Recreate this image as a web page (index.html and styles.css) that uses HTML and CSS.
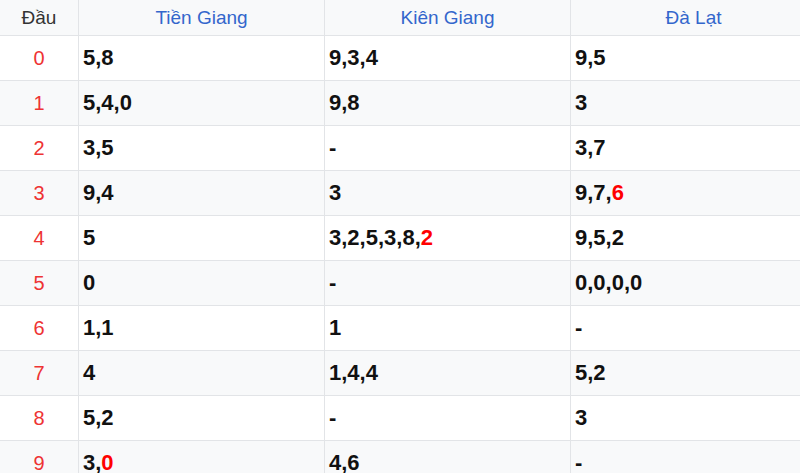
FILE: index.html
```html
<!DOCTYPE html>
<html lang="vi">
<head>
<meta charset="utf-8">
<link rel="stylesheet" href="styles.css">
</head>
<body>
<div class="wrap">
<table class="loto">
<colgroup><col class="c-head"><col class="c-prov"><col class="c-prov"><col class="c-prov"></colgroup>
<thead>
<tr><th class="dau">Đầu</th><th>Tiền Giang</th><th>Kiên Giang</th><th>Đà Lạt</th></tr>
</thead>
<tbody>
<tr><td class="d">0</td><td>5,8</td><td>9,3,4</td><td>9,5</td></tr>
<tr><td class="d">1</td><td>5,4,0</td><td>9,8</td><td>3</td></tr>
<tr><td class="d">2</td><td>3,5</td><td>-</td><td>3,7</td></tr>
<tr><td class="d">3</td><td>9,4</td><td>3</td><td>9,7,<span class="r">6</span></td></tr>
<tr><td class="d">4</td><td>5</td><td>3,2,5,3,8,<span class="r">2</span></td><td>9,5,2</td></tr>
<tr><td class="d">5</td><td>0</td><td>-</td><td>0,0,0,0</td></tr>
<tr><td class="d">6</td><td>1,1</td><td>1</td><td>-</td></tr>
<tr><td class="d">7</td><td>4</td><td>1,4,4</td><td>5,2</td></tr>
<tr><td class="d">8</td><td>5,2</td><td>-</td><td>3</td></tr>
<tr><td class="d">9</td><td>3,<span class="r">0</span></td><td>4,6</td><td>-</td></tr>
</tbody>
</table>
</div>
</body>
</html>
```
FILE: styles.css
```css
html, body {
  margin: 0;
  padding: 0;
  background: #fff;
}
.wrap {
  width: 800px;
  height: 473px;
  overflow: hidden;
}
.loto {
  border-collapse: collapse;
  table-layout: fixed;
  width: 817px;
  margin: -1px 0 0 -1px;
  font-family: "Liberation Sans", Arial, sans-serif;
}
.c-head { width: 79px; }
.c-prov { width: 246px; }
.loto th, .loto td {
  border: 1px solid #e2e4e7;
  padding: 0 4px;
}
.loto th {
  height: 35px;
  background: #f8f9fa;
  font-weight: normal;
  font-size: 19px;
  color: #3366cc;
  text-align: center;
}
.loto th.dau {
  color: #333;
}
.loto td {
  height: 44px;
  font-size: 22px;
  font-weight: bold;
  color: #111;
  text-align: left;
}
.loto tbody tr:nth-child(even) td {
  background: #f8f9fa;
}
.loto td.d {
  font-weight: normal;
  font-size: 20px;
  color: #ee3333;
  text-align: center;
}
.r {
  color: #ff0000;
}
```
